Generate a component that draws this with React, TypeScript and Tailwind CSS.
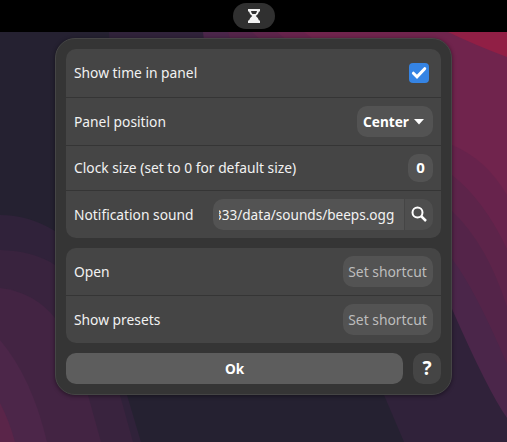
import type { ReactNode } from "react";

function Wallpaper() {
  return (
    <svg className="absolute inset-0 h-full w-full" viewBox="0 0 507 442" preserveAspectRatio="none">
      <rect width="507" height="442" fill="#252131" />
      <path d="M109 32 Q110 180 384 395 L404 442 H507 V32Z" fill="#30223a" />
      <path d="M203 32 Q210 120 452 309 Q488 391 507 418 V32Z" fill="#4b264a" />
      <path d="M228 32 Q250 120 452 259 Q474 287 507 364 V32Z" fill="#542449" />
      <path d="M252 32 L452 211 Q487 244 507 307 V32Z" fill="#5d244a" />
      <path d="M277 32 L452 175 Q484 200 507 249 V32Z" fill="#67234c" />
      <path d="M304 32 L452 145 Q486 159 507 195 V32Z" fill="#70244d" />
      <path d="M448 32 Q475 45 507 57 V32Z" fill="#911f45" />
      <path d="M0 215 Q29 215 55 231 Q105 285 127 395 L141 442 H0Z" fill="#30223a" />
      <path d="M0 250 Q34 251 55 265 Q100 310 120 395 L133 442 H0Z" fill="#39233e" />
      <path d="M0 288 Q34 292 55 318 Q75 350 88 395 L101 442 H0Z" fill="#432443" />
      <path d="M0 340 Q32 378 47 442 H0Z" fill="#4c2649" />
      <path d="M0 403 Q9 420 15 442 H0Z" fill="#5a2549" />
    </svg>
  );
}

function Row({ label, className, children }: { label: string; className: string; children: ReactNode }) {
  return (
    <div className={`flex items-center justify-between px-2 ${className}`}>
      <span className="mb-[2px] origin-left scale-x-[0.92] whitespace-nowrap">{label}</span>
      {children}
    </div>
  );
}

function Shortcut() {
  return (
    <button className="flex h-[31px] w-[90px] items-center justify-center rounded-[10px] bg-[#535353] pb-[2px] whitespace-nowrap text-[#bdbdbd]">
      <span className="scale-x-[0.925]">Set shortcut</span>
    </button>
  );
}

export default function App() {
  return (
    <main className="relative h-[442px] w-[507px] overflow-hidden font-['Noto_Sans',sans-serif] text-[15px] leading-5 text-[#f2f2f2]">
      <Wallpaper />
      <div className="relative flex h-full flex-col">
        <header className="h-8 bg-black pt-[3px] pl-[233px]">
          <div className="flex h-[26px] w-[42px] items-center justify-center rounded-full bg-[#303030]">
            <svg width="12" height="14" viewBox="0 0 12 14" fill="#f2f2f2">
              <path fillRule="evenodd" d="M0 0H12V2.5H11Q10.8 4.6 7.8 7Q10.8 9.4 11 11.5H12V14H0V11.5H1Q1.2 9.4 4.2 7Q1.2 4.6 1 2.5H0ZM3 2Q3.3 4 4.4 5H7.6Q8.7 4 9 2Z" />
            </svg>
          </div>
        </header>

        <section className="mt-[6px] ml-[55px] flex h-[357px] w-[397px] flex-col gap-[10px] rounded-[20px] border border-[#454545] bg-[#353535] p-[10px] shadow-[0_1px_4px_rgba(0,0,0,0.45)]">
          <div className="flex h-[189px] flex-col divide-y divide-[#353535] rounded-[10px] bg-[#454545]">
            <Row label="Show time in panel" className="h-[49px] pb-px">
              <span className="mr-1 flex size-5 items-center justify-center rounded-[4px] bg-[#3584e4]">
                <svg width="16" height="14" viewBox="0 0 16 14" fill="none" stroke="white" strokeWidth="3" strokeLinecap="round">
                  <path d="M2.4 7.2 6 10.8 13.7 2.7" />
                </svg>
              </span>
            </Row>
            <Row label="Panel position" className="h-12">
              <button className="flex h-[31px] w-[76px] items-center rounded-[10px] bg-[#535353] pl-[6px] font-bold text-white">
                <span className="mb-[2px] w-[51px] origin-left scale-x-[0.91] text-left">Center</span>
                <svg width="10" height="6" viewBox="0 0 10 6" fill="white"><path d="M0 0H10L5 5.5Z" /></svg>
              </button>
            </Row>
            <Row label="Clock size (set to 0 for default size)" className="h-[45px]">
              <button className="h-7 w-[25px] rounded-[10px] bg-[#535353] pb-[2px] font-bold text-white">0</button>
            </Row>
            <Row label="Notification sound" className="h-[47px]">
              <div className="flex h-[31px] w-[220px] shrink-0 gap-px">
                <div className="w-[191px] rounded-l-[10px] bg-[#535353] pr-[10px] pl-[6px]">
                  <div className="flex h-full items-center justify-end overflow-hidden pb-[2px] whitespace-nowrap">
                    <span className="origin-right scale-x-[0.905]">333/data/sounds/beeps.ogg</span>
                  </div>
                </div>
                <button className="flex w-7 items-center justify-center rounded-r-[10px] bg-[#4e4e4e]">
                  <svg className="mb-[2px]" width="16" height="16" viewBox="0 0 16 16" fill="none" stroke="white" strokeWidth="2">
                    <circle cx="6.5" cy="6.5" r="5" /><path d="m10 10 5 5" strokeWidth="2.5" />
                  </svg>
                </button>
              </div>
            </Row>
          </div>
          <div className="flex h-[95px] flex-col divide-y divide-[#353535] rounded-[10px] bg-[#454545]">
            <Row label="Open" className="h-12"><Shortcut /></Row>
            <Row label="Show presets" className="h-[47px]"><Shortcut /></Row>
          </div>
          <div className="flex h-[31px] gap-[10px] font-bold text-white">
            <button className="flex w-[337px] items-center justify-center rounded-[10px] bg-[#5d5d5d] pb-[2px]">
              <span className="scale-x-[0.91]">Ok</span>
            </button>
            <button className="w-7 rounded-[10px] bg-[#454545] pb-[2px] text-[19px]">?</button>
          </div>
        </section>
      </div>
    </main>
  );
}
